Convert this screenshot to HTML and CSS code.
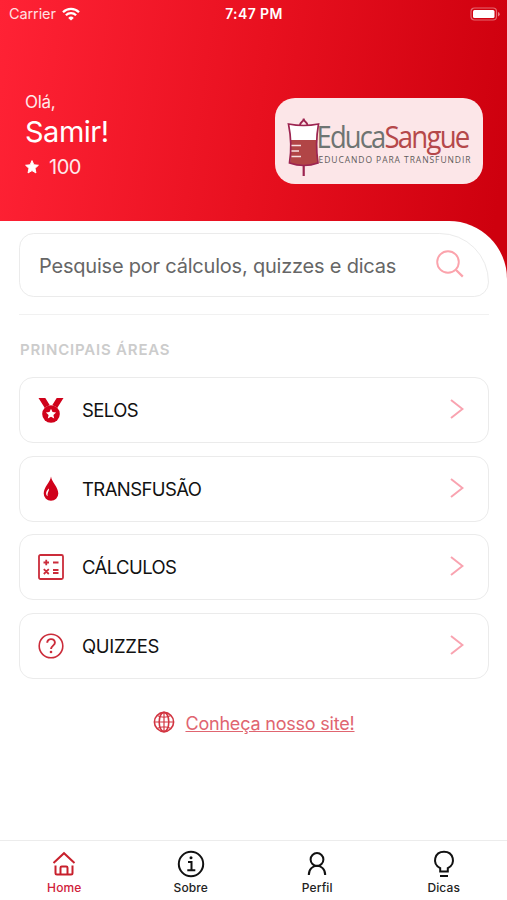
FILE: index.html
```
<!DOCTYPE html>
<html lang="pt-BR">

<head>
    <meta charset="UTF-8">
    <meta name="viewport" content="width=device-width, initial-scale=1.0">
    <title>EducaSangue</title>
    <link rel="stylesheet" href="styles.css">
</head>

<body>
    <div class="app">
        <div class="status-bar">
            <div class="carrier">
                <span>Carrier</span>
                <svg width="18" height="14" viewBox="0 0 18 14" fill="none" stroke="#fff" stroke-width="2.3">
                    <path d="M1 5.2a11.3 11.3 0 0 1 16 0" />
                    <path d="M3.9 8.3a7.2 7.2 0 0 1 10.2 0" />
                    <path d="M9 13.6L6.2 10.9a4 4 0 0 1 5.6 0z" fill="#fff" stroke="none" />
                </svg>
            </div>
            <div class="time">7:47 PM</div>
            <svg class="battery" width="31" height="14" viewBox="0 0 31 14">
                <rect x="1" y="1" width="25.5" height="12" rx="3.5" fill="none" stroke="#fff" stroke-opacity=".4" stroke-width="1.2" />
                <rect x="3" y="3" width="21.5" height="8" rx="1.5" fill="#fff" />
                <path d="M28 5v4.400q1.700-.6 1.700-2.200T28 5z" fill="#fff" fill-opacity=".5" />
            </svg>
        </div>

        <div class="header">
            <div class="user">
                <p class="hello">Olá,</p>
                <p class="name">Samir!</p>
                <p class="points">
                    <svg width="14" height="14" viewBox="0 0 24 24">
                        <path d="M12 1l3.200 7.200 7.800.8-5.800 5.300 1.600 7.900L12 18.200l-6.800 4 1.600-7.900L1 9l7.800-.8z" fill="#fff" stroke="#fff" stroke-width="1.600" stroke-linejoin="round" />
                    </svg>
                    <span>100</span>
                </p>
            </div>
            <div class="logo">
                <svg width="208" height="86" viewBox="0 0 208 86">
                    <!-- bolsa de sangue -->
                    <path d="M14 26q14 3 29 0-3.500 20-.5 39-14 5-28 0 3-19-.5-39z" fill="#fff" />
                    <path d="M16 42h25.500q-.5 12 1.500 23-14 5-28 0 1.500-12 1-23z" fill="#b14546" />
                    <path d="M13.500 26q15 3 30 0-3.500 20-.5 39-14 5-28.500 0 3-19-1-39z" fill="none" stroke="#9c2450" stroke-width="1.700" />
                    <path d="M25 27c0-3 3.700-3 3.700-6.500 0 3.500 3.700 3.500 3.700 6.500" fill="none" stroke="#9c2450" stroke-width="1.800" />
                    <path d="M28.700 68v10" stroke="#9c2450" stroke-width="2.200" />
                    <path d="M16.500 47.500h9.500M16.500 53h7.500M16.500 58.500h9.500" stroke="#f7dfe1" stroke-width="1.700" />
                    <text x="41.500" y="50.300" class="logo-name gray" textLength="68" lengthAdjust="spacingAndGlyphs">Educa</text>
                    <text x="109.500" y="50.300" class="logo-name red" textLength="84" lengthAdjust="spacingAndGlyphs">Sangue</text>
                    <text x="43.500" y="64.700" class="logo-slogan" textLength="152" lengthAdjust="spacing">EDUCANDO PARA TRANSFUNDIR</text>
                </svg>
            </div>
        </div>

        <div class="content">
            <div class="search">
                <span>Pesquise por cálculos, quizzes e dicas</span>
                <svg width="30" height="30" viewBox="0 0 30 30" fill="none" stroke="#fba3ac" stroke-width="1.900">
                    <circle cx="13" cy="13" r="10.800" />
                    <path d="M20.800 20.800l7 6.800" stroke-width="2.200" />
                </svg>
            </div>

            <div class="divider"></div>

            <h2 class="title">PRINCIPAIS ÁREAS</h2>

            <div class="menu">
                <div class="card">
                    <svg class="icon" viewBox="0 0 26 26">
                        <path d="M.5 1h6.800l4.500 7.300Q8.800 8.800 6.800 11zM25.500 1h-6.800l-4.500 7.300q3 .5 5 2.700z" fill="#d0021b" />
                        <circle cx="13" cy="17" r="8.800" fill="#d0021b" />
                        <path d="M13 11.800l1.500 3.300 3.600.4-2.700 2.400.8 3.600-3.200-1.800-3.200 1.800.8-3.600-2.700-2.400 3.600-.4z" fill="#fff" />
                    </svg>
                    <span>SELOS</span>
                    <svg class="arrow" viewBox="0 0 14 20"><path d="M1 1l11.500 9L1 19" /></svg>
                </div>
                <div class="card">
                    <svg class="icon" viewBox="0 0 26 26">
                        <path d="M13 .5c.8 5.800 7.300 10.500 7.300 17A7.300 7.300 0 0 1 5.700 17.500C5.700 11 12.200 6.300 13 .5z" fill="#d0021b" />
                        <path d="M11 12.500c.2 3-2 4-1.300 7.800-3-2.300-1.200-5.600 1.300-7.800z" fill="#fff" />
                    </svg>
                    <span>TRANSFUSÃO</span>
                    <svg class="arrow" viewBox="0 0 14 20"><path d="M1 1l11.500 9L1 19" /></svg>
                </div>
                <div class="card">
                    <svg class="icon" viewBox="0 0 26 26" fill="none" stroke="#cb2c3a" stroke-width="1.800">
                        <rect x="1" y="1" width="24" height="24" rx="1.500" />
                        <path d="M5.500 8.500h5.500M8.250 5.800v5.500M15 8.500h5.500M15 16h5.500M15 19h5.500M5.800 15.200l5 4.800M10.800 15.200l-5 4.800" />
                    </svg>
                    <span>CÁLCULOS</span>
                    <svg class="arrow" viewBox="0 0 14 20"><path d="M1 1l11.500 9L1 19" /></svg>
                </div>
                <div class="card">
                    <svg class="icon" viewBox="0 0 26 26" fill="none" stroke="#cb2c3a" stroke-width="1.600">
                        <circle cx="13" cy="13" r="11.800" />
                        <path d="M9.200 9.800c0-5 7.700-4.800 7.700 0 0 2.700-3.900 3-3.900 6.200" stroke-width="1.900" />
                        <circle cx="13" cy="19" r="1.300" fill="#cb2c3a" stroke="none" />
                    </svg>
                    <span class="wide">QUIZZES</span>
                    <svg class="arrow" viewBox="0 0 14 20"><path d="M1 1l11.500 9L1 19" /></svg>
                </div>
            </div>

            <div class="site">
                <svg width="22" height="22" viewBox="0 0 22 22" fill="none" stroke="#d23541" stroke-width="1.600">
                    <circle cx="11" cy="11" r="9.600" />
                    <ellipse cx="11" cy="11" rx="4.800" ry="9.600" />
                    <path d="M11 1.400v19.200M1.400 11h19.200M4 4.500q7 3.500 14 0M4 17.500q7-3.500 14 0" stroke-width="1.200" />
                </svg>
                <a>Conheça nosso site!</a>
            </div>
        </div>

        <div class="tabs">
            <div class="tab active">
                <svg width="28" height="28" viewBox="0 0 28 28">
                    <path d="M3.500 13L14 3.200 24.500 13" />
                    <path d="M5.500 15.500v7.500q0 1.500 1.500 1.500h3.500v-6.700q0-1.300 1.300-1.300h4.400q1.300 0 1.300 1.300v6.700H21q1.500 0 1.500-1.500v-7.500M10.500 24.500h7" />
                </svg>
                <span>Home</span>
            </div>
            <div class="tab">
                <svg width="28" height="28" viewBox="0 0 28 28">
                    <circle cx="14" cy="14" r="12.200" />
                    <path d="M11 12h3.500v8M10.300 20.200h8" />
                    <circle cx="14" cy="7.700" r="1.500" fill="#111" stroke="none" />
                </svg>
                <span>Sobre</span>
            </div>
            <div class="tab">
                <svg width="28" height="28" viewBox="0 0 28 28">
                    <circle cx="14" cy="9.500" r="6.400" />
                    <path d="M5.800 25c0-12.200 16.400-12.200 16.400 0" />
                </svg>
                <span>Perfil</span>
            </div>
            <div class="tab">
                <svg width="28" height="28" viewBox="0 0 28 28">
                    <path d="M10.200 21.500v-3.300C1.500 13.500 4.500 1.800 14 1.800s12.500 11.700 3.800 16.400v3.300z" />
                    <path d="M10 26h8" />
                </svg>
                <span>Dicas</span>
            </div>
        </div>
    </div>
</body>

</html>
```
FILE: styles.css
```
* {
    margin: 0;
    padding: 0;
    box-sizing: border-box;
}

body {
    font-family: 'Inter', 'Liberation Sans', sans-serif;
    background-color: #fff;
}

svg {
    display: block;
    flex-shrink: 0;
}

.app {
    width: 507px;
    height: 900px;
    display: flex;
    flex-direction: column;
    overflow: hidden;
    background: linear-gradient(98deg, #ff2235 0%, #e8101f 50%, #ce000e 96%) no-repeat;
    background-size: 100% 300px;
}

/* barra de status */
.status-bar {
    height: 27px;
    padding: 0 6px 0 9px;
    display: grid;
    grid-template-columns: 1fr auto 1fr;
    align-items: center;
    color: #fff;
}

.carrier {
    display: flex;
    align-items: center;
    gap: 6px;
    font-size: 14.5px;
    letter-spacing: -0.1px;
    color: #ffe0e2;
}

.time {
    margin-left: -2px;
    font-size: 14px;
    font-weight: 600;
    letter-spacing: 0.4px;
}

.battery {
    justify-self: end;
}

.header {
    height: 194px;
    padding: 65px 24px 0 25px;
    display: flex;
    justify-content: space-between;
    color: #fff;
}

.hello {
    font-size: 17px;
    line-height: 20px;
    letter-spacing: -0.3px;
    opacity: 0.9;
}

.name {
    font-size: 29px;
    line-height: 39px;
    letter-spacing: -0.5px;
}

.points {
    display: flex;
    align-items: center;
    gap: 10px;
    margin-top: 3px;
    font-size: 20px;
    line-height: 26px;
    letter-spacing: -0.5px;
}

.points span {
    opacity: 0.9;
}

.logo {
    width: 208px;
    height: 86px;
    margin-top: 6px;
    border-radius: 20px;
    background-color: #fce6e8;
}

.logo-name {
    font-family: 'Open Sans', sans-serif;
    font-size: 30.5px;
    letter-spacing: -2px;
}

.gray {
    fill: #6e7472;
}

.red {
    fill: #b5484a;
}

.logo-slogan {
    font-family: 'Open Sans', sans-serif;
    font-size: 8.5px;
    fill: #5f5b5b;
}

.content {
    flex: 1;
    padding: 12px 18px 0 19px;
    border-top-right-radius: 58px;
    background-color: #fff;
}

.search {
    height: 64px;
    padding: 1px 23px 0 19px;
    display: flex;
    align-items: center;
    justify-content: space-between;
    border: 1.5px solid #ebebeb;
    border-radius: 15px 50px 15px 15px;
    font-size: 20px;
    letter-spacing: -0.21px;
    color: #666;
}

.search svg {
    margin-top: -4px;
}

.divider {
    height: 1px;
    margin: 17px 0 26px;
    background-color: #f1f1f1;
}

.title {
    padding-left: 1px;
    font-size: 15px;
    line-height: 18px;
    font-weight: 600;
    letter-spacing: 0.8px;
    color: #ccc;
}

.menu {
    display: flex;
    flex-direction: column;
    gap: 12.7px;
    margin-top: 18px;
}

.card {
    height: 66px;
    padding: 0 24px 0 18px;
    display: flex;
    align-items: center;
    border: 1.5px solid #ebebeb;
    border-radius: 14px;
    font-size: 18.5px;
    color: #111;
}

.card span {
    flex: 1;
    margin-left: 18px;
    letter-spacing: -0.6px;
}

.card .wide {
    letter-spacing: -0.3px;
}

.icon {
    width: 26px;
    height: 26px;
}

.arrow {
    width: 14px;
    height: 20px;
    margin-top: -2px;
    fill: none;
    stroke: #f9a3b0;
    stroke-width: 2;
}

.site {
    display: flex;
    justify-content: center;
    align-items: center;
    gap: 10px;
    margin-top: 33px;
}

.site svg {
    margin-top: -4px;
}

.site a {
    font-size: 18px;
    line-height: 24px;
    letter-spacing: -0.2px;
    color: #e06570;
    text-decoration: underline;
}

/* menu inferior */
.tabs {
    height: 60px;
    padding-left: 1px;
    display: flex;
    background-color: #fff;
    border-top: 1px solid #ececec;
}

.tab {
    flex: 1;
    display: flex;
    flex-direction: column;
    align-items: center;
    padding-top: 9px;
    font-size: 12px;
    font-weight: 500;
    letter-spacing: 0.1px;
    color: #222;
}

.tab svg {
    fill: none;
    stroke: #111;
    stroke-width: 2;
}

.tab span {
    line-height: 20px;
}

.tab.active {
    color: #d0213a;
}

.tab.active svg {
    stroke: #c8202c;
}
```
